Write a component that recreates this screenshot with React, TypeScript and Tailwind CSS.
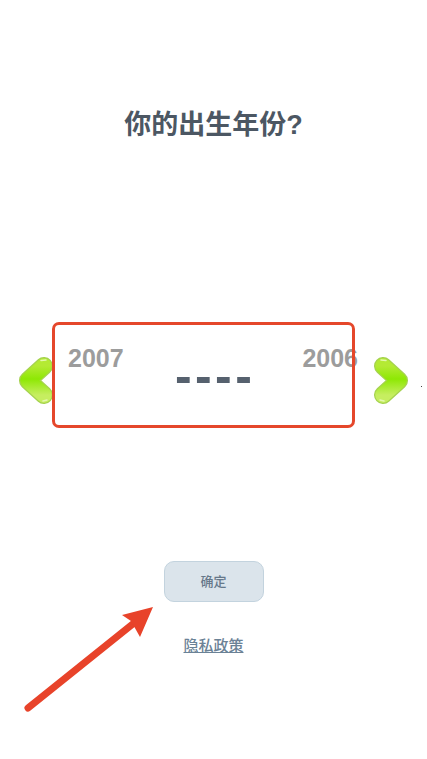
function Chevron({ id, flip }: { id: string; flip?: boolean }) {
  return (
    <svg
      width="34"
      height="47"
      viewBox="0 0 34 47"
      className={flip ? "mt-[11px] shrink-0 -scale-x-100" : "mt-[11px] shrink-0"}
    >
      <defs>
        <linearGradient id={id} x1="0" y1="0" x2="0" y2="1">
          <stop offset="0" stopColor="#b4ea34" />
          <stop offset="0.45" stopColor="#8ee804" />
          <stop offset="1" stopColor="#c6ee60" />
        </linearGradient>
      </defs>
      <path d="M25 9 L9 23.5 L25 38" fill="none" stroke="#a5d24f" strokeWidth="18" strokeLinecap="round" strokeLinejoin="round" />
      <path d="M25 9 L9 23.5 L25 38" fill="none" stroke={`url(#${id})`} strokeWidth="15.5" strokeLinecap="round" strokeLinejoin="round" />
      <path d="M22 3.5 L27 3" fill="none" stroke="#e4f8b0" strokeWidth="1.5" strokeLinecap="round" />
      <path d="M24 44 L28 43" fill="none" stroke="#e4f8b0" strokeWidth="1.5" strokeLinecap="round" />
    </svg>
  );
}

export default function App() {
  return (
    <div className="relative flex h-[759px] w-[427px] flex-col items-center overflow-hidden bg-white font-['Liberation_Sans','Noto_Sans_CJK_SC',sans-serif]">
      <h1 className="mt-[106px] text-[27px] leading-[38px] font-bold text-[#4c5763]">你的出生年份?</h1>

      {/* 年份选择 */}
      <div className="relative mt-[178px] flex h-[106px] w-full items-center pl-[19px]">
        <Chevron id="chev-left" />
        <div className="flex h-full w-[321px] flex-col">
          <div className="mt-[21px] flex justify-between pr-[16px] pl-[15px] text-[25px] leading-[30px] font-bold text-[#9c9c9c]">
            <span>2007</span>
            <span>2006</span>
          </div>
          <div className="-mt-[22px] ml-[122px] text-[50px] leading-[50px] font-bold tracking-[3.4px] text-[#56616e]">----</div>
        </div>
        <Chevron id="chev-right" flip />
        <span className="mt-[22px] ml-[13px] h-px w-px bg-[#444]" />
        {/* 标注框 */}
        <div className="absolute top-0 left-[52px] h-[106px] w-[303px] rounded-[7px] border-[3.5px] border-[#e5472b]" />
      </div>

      <button className="mt-[133px] h-[41px] w-[100px] rounded-[10px] border border-[#c3d3de] bg-[#dbe4eb] text-[13px] font-medium text-[#66788a]">
        确定
      </button>
      <a className="mt-[34px] text-[15px] leading-[20px] font-medium text-[#6b8296] underline">隐私政策</a>

      {/* 标注箭头 */}
      <svg className="absolute top-[600px] left-[20px]" width="140" height="115" viewBox="20 600 140 115">
        <path d="M28 708 L134 623" stroke="#e8432a" strokeWidth="7" strokeLinecap="round" fill="none" />
        <path d="M153 607 L122 615 L131 621 L140 637 Z" fill="#e8432a" />
      </svg>
    </div>
  );
}
